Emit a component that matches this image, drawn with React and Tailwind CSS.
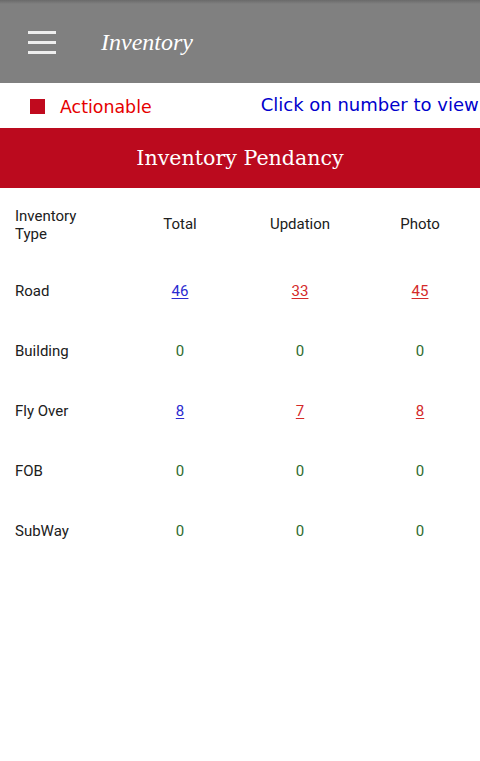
import React from "react";

const rows = [
    { name: "Road", total: 46, updation: 33, photo: 45 },
    { name: "Building", total: 0, updation: 0, photo: 0 },
    { name: "Fly Over", total: 8, updation: 7, photo: 8 },
    { name: "FOB", total: 0, updation: 0, photo: 0 },
    { name: "SubWay", total: 0, updation: 0, photo: 0 },
];

function Cell({ value, color }) {
    if (value === 0) {
        return <span className="text-[#2e6b2e]">0</span>;
    }
    return (
        <a href="#" className={"underline underline-offset-2 " + color}>
            {value}
        </a>
    );
}

export default function App() {
    return (
        <div className="w-[480px] h-[761px] bg-white overflow-hidden">
            <div className="h-[83px] bg-[#808080] flex items-center bg-gradient-to-b from-[#6a6a6a] via-[#808080] to-[#808080] [background-size:100%_8px] [background-repeat:no-repeat]">
                <div className="ml-[28px] flex flex-col gap-[7px] pt-[1px]">
                    <span className="block w-[28px] h-[3px] bg-[#eeeeee]" />
                    <span className="block w-[28px] h-[3px] bg-[#eeeeee]" />
                    <span className="block w-[28px] h-[3px] bg-[#eeeeee]" />
                </div>
                <h1 className="ml-[45px] text-white italic text-[24px] font-['Liberation_Serif',serif]">
                    Inventory
                </h1>
            </div>

            <div className="h-[45px] flex items-center whitespace-nowrap overflow-hidden font-['DejaVu_Sans',sans-serif]">
                <span className="ml-[30px] w-[15px] h-[15px] bg-[#c00a1e] shrink-0 mt-[2px]" />
                <span className="ml-[15px] text-[17.4px] text-[#e60000] mt-[4px]">Actionable</span>
                <span className="ml-[109px] text-[18px] text-[#0000cc] -mt-[2px]">
                    Click on number to view
                </span>
            </div>

            <div className="h-[60px] bg-[#bb0a1e] flex items-center justify-center">
                <h2 className="text-white text-[20.6px] font-['DejaVu_Serif',serif]">
                    Inventory Pendancy
                </h2>
            </div>

            <div className="font-['Roboto',sans-serif] text-[15px] text-[#202020]">
                <div className="grid grid-cols-4 h-[73px] items-center">
                    <div className="pl-[15px] leading-[18px]">
                        Inventory
                        <br />
                        Type
                    </div>
                    <div className="text-center">Total</div>
                    <div className="text-center">Updation</div>
                    <div className="text-center">Photo</div>
                </div>
                {rows.map((r) => (
                    <div key={r.name} className="grid grid-cols-4 h-[60px] items-center">
                        <div className="pl-[15px]">{r.name}</div>
                        <div className="text-center">
                            <Cell value={r.total} color="text-[#2b2bd0] decoration-[#2b2bd0]" />
                        </div>
                        <div className="text-center">
                            <Cell value={r.updation} color="text-[#d42a2a] decoration-[#d42a2a]" />
                        </div>
                        <div className="text-center">
                            <Cell value={r.photo} color="text-[#d42a2a] decoration-[#d42a2a]" />
                        </div>
                    </div>
                ))}
            </div>
        </div>
    );
}
